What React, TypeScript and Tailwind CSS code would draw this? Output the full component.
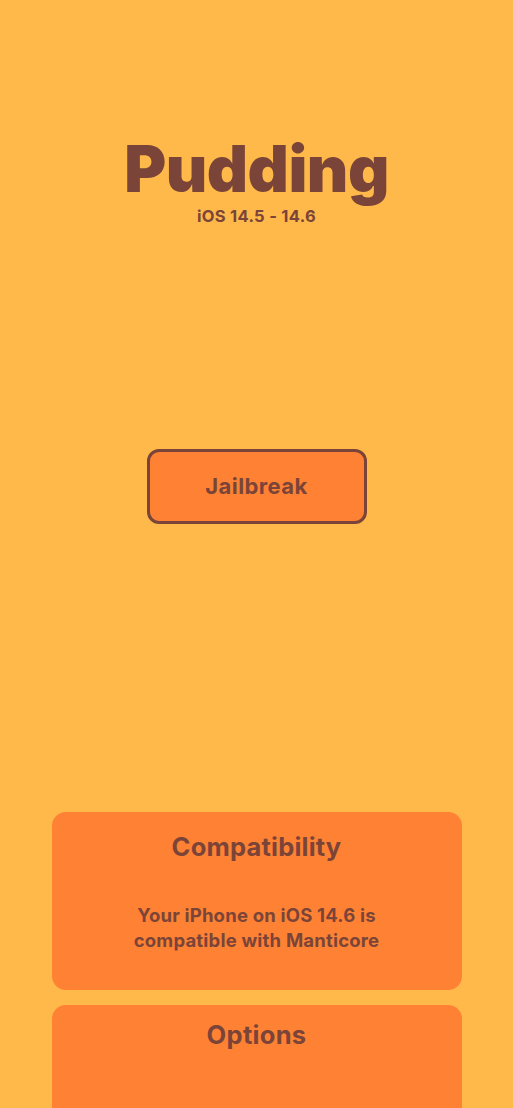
export default function App() {
  return (
    <div
      className="min-h-[1108px] w-full bg-[#FFB84A] text-[#7A4538] flex flex-col items-center overflow-hidden"
      style={{ fontFamily: 'Inter, "Noto Sans", sans-serif' }}
    >
      <h1 className="mt-[137px] text-[64px] leading-[64px] font-black tracking-[-0.5px]">Pudding</h1>
      <p className="mt-[5px] text-[16.5px] leading-[20px] font-bold tracking-[0.3px]">iOS 14.5 - 14.6</p>
      <button className="mt-[223px] w-[220px] h-[75px] rounded-[12px] border-[3px] border-[#7A4538] bg-[#FF8133] text-[22px] font-bold tracking-[0.4px]">
        Jailbreak
      </button>
      <div className="mt-[288px] w-[410px] h-[178px] rounded-[14px] bg-[#FF8133] flex flex-col items-center">
        <h2 className="mt-[19px] text-[25.5px] leading-[32px] font-bold tracking-[0.2px]">Compatibility</h2>
        <p className="mt-[40px] text-[18.5px] leading-[25px] font-bold text-center tracking-[0.2px]">
          Your iPhone on iOS 14.6 is
          <br />
          compatible with Manticore
        </p>
      </div>
      <div className="mt-[15px] w-[410px] h-[140px] rounded-t-[14px] bg-[#FF8133] flex flex-col items-center">
        <h2 className="mt-[14px] text-[25.5px] leading-[32px] font-bold tracking-[0.3px]">Options</h2>
      </div>
    </div>
  );
}
